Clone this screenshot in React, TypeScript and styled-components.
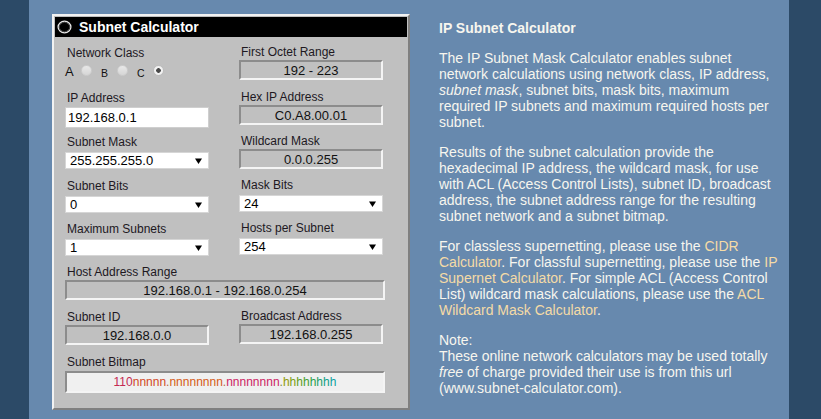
import React from "react";
import styled, { createGlobalStyle } from "styled-components";

const GlobalStyle = createGlobalStyle`
  html, body { margin: 0; padding: 0; }
  body {
    background: #2c4a67;
    font-family: "Liberation Sans", Arial, sans-serif;
  }
`;

const Page = styled.div`
  display: flex;
  padding-left: 29px;
  min-height: 100vh;
`;

const Main = styled.main`
  width: 760px;
  min-height: 100vh;
  background: #6789ae;
  display: flex;
  align-items: flex-start;
  gap: 29px;
  padding: 14px 0 0 23px;
  box-sizing: border-box;
`;

const Panel = styled.section`
  width: 358px;
  box-sizing: border-box;
  background: #c0c0c0;
  border: 2px solid;
  border-color: #f2f2f2 #808080 #808080 #f2f2f2;
  padding: 1px;
`;

const TitleBar = styled.div`
  height: 20px;
  background: #000;
  display: flex;
  align-items: center;
  padding-left: 2px;
  gap: 7px;
  color: #fff;
  font-size: 14px;
  font-weight: bold;
`;

const Body = styled.div`
  display: grid;
  grid-template-columns: 144px 144px;
  grid-template-rows: 45px 44px 44px 43px 43px 45px 45px auto;
  column-gap: 30px;
  padding: 9px 0 14px 10px;
`;

const Cell = styled.div<{ $wide?: boolean; $right?: boolean }>`
  display: flex;
  flex-direction: column;
  align-items: flex-start;
  grid-column: ${(p) => (p.$wide ? "1 / span 2" : "auto")};
  margin-top: ${(p) => (p.$right ? "-1px" : "0")};
`;

const Label = styled.div`
  font-size: 12px;
  line-height: 14px;
  color: #20181f;
  white-space: nowrap;
  padding-left: 2px;
`;

const Output = styled.div<{ $width?: number; $light?: boolean }>`
  box-sizing: border-box;
  width: ${(p) => p.$width ?? 144}px;
  height: ${(p) => (p.$light ? 22 : 20)}px;
  margin-top: ${(p) => (p.$light ? 2 : 1)}px;
  background: ${(p) => (p.$light ? "#f0f0f0" : "#c0c0c0")};
  border: 2px solid;
  border-color: #8c8c8c #f4f4f4 #f4f4f4 #8c8c8c;
  display: flex;
  align-items: center;
  justify-content: center;
  font-size: ${(p) => (p.$light ? 12 : 13)}px;
  color: #111;
  white-space: nowrap;
`;

const TextInput = styled.div`
  box-sizing: border-box;
  width: 144px;
  height: 21px;
  margin-top: 2px;
  background: #fff;
  border: 1px solid #cfcfcf;
  display: flex;
  align-items: center;
  padding-left: 2px;
  font-size: 13px;
  color: #000;
`;

const Select = styled.div`
  box-sizing: border-box;
  width: 144px;
  height: 17px;
  margin-top: 3px;
  background: #fff;
  border: 1px solid #d6d6d6;
  display: flex;
  align-items: center;
  justify-content: space-between;
  padding: 0 6px 0 4px;
  font-size: 13px;
  color: #000;
`;

const RadioRow = styled.div`
  display: flex;
  align-items: center;
  height: 20px;
`;

const RadioGroup = styled.label`
  display: flex;
  align-items: center;
  margin-right: 9px;
`;

const Letter = styled.span<{ $small?: boolean }>`
  width: 16px;
  font-size: ${(p) => (p.$small ? 10.5 : 13)}px;
  line-height: 14px;
  color: #111;
  padding-top: ${(p) => (p.$small ? 5 : 3)}px;
`;

const Radio = styled.span<{ $on?: boolean }>`
  box-sizing: border-box;
  width: 11px;
  height: 11px;
  border-radius: 50%;
  border: 1px solid ${(p) => (p.$on ? "#bdbdbd" : "#cdcdcd")};
  background: ${(p) =>
    p.$on
      ? "radial-gradient(circle, #4a4a4a 0 2px, #f2f2f2 2.6px)"
      : "linear-gradient(#e8e8e8, #d6d6d6)"};
`;

const Bits = styled.span<{ $c: string }>`
  color: ${(p) => p.$c};
`;

const Side = styled.article`
  width: 341px;
  padding-top: 6px;
  color: #f7f6ee;
  font-size: 14px;
  line-height: 16px;
`;

const Heading = styled.h2`
  font-size: 14px;
  line-height: 16px;
  font-weight: bold;
  margin: 0 0 14px;
`;

const Para = styled.p`
  margin: 0 0 14px;
`;

const Link = styled.a`
  color: #f5dba6;
  text-decoration: none;
`;

const Arrow = () => (
  <svg width="7" height="6" viewBox="0 0 7 6" aria-hidden="true">
    <polygon points="0,0.5 7,0.5 3.5,6" fill="#000" />
  </svg>
);

const TitleIcon = () => (
  <svg width="15" height="14" viewBox="0 0 15 14" aria-hidden="true">
    <ellipse cx="7.5" cy="7" rx="6.4" ry="5.8" fill="#000" stroke="#e8e8e8" strokeWidth="1.3" />
    <ellipse cx="7.5" cy="7" rx="5.2" ry="4.6" fill="none" stroke="#555" strokeWidth="0.8" />
  </svg>
);

const hColors = ["#8f9a08", "#7a9f10", "#5e9e20", "#44a030", "#2aa048", "#18a068", "#0ea088", "#0aa0a0"];

export default function App() {
  return (
    <>
      <GlobalStyle />
      <Page>
        <Main>
          <Panel>
            <TitleBar>
              <TitleIcon />
              <span>Subnet Calculator</span>
            </TitleBar>
            <Body>
              <Cell>
                <Label>Network Class</Label>
                <RadioRow>
                  <RadioGroup>
                    <Letter>A</Letter>
                    <Radio />
                  </RadioGroup>
                  <RadioGroup>
                    <Letter $small>B</Letter>
                    <Radio />
                  </RadioGroup>
                  <RadioGroup>
                    <Letter $small>C</Letter>
                    <Radio $on />
                  </RadioGroup>
                </RadioRow>
              </Cell>
              <Cell $right>
                <Label>First Octet Range</Label>
                <Output>192 - 223</Output>
              </Cell>

              <Cell>
                <Label>IP Address</Label>
                <TextInput>192.168.0.1</TextInput>
              </Cell>
              <Cell $right>
                <Label>Hex IP Address</Label>
                <Output>C0.A8.00.01</Output>
              </Cell>

              <Cell>
                <Label>Subnet Mask</Label>
                <Select>
                  <span>255.255.255.0</span>
                  <Arrow />
                </Select>
              </Cell>
              <Cell $right>
                <Label>Wildcard Mask</Label>
                <Output>0.0.0.255</Output>
              </Cell>

              <Cell>
                <Label>Subnet Bits</Label>
                <Select>
                  <span>0</span>
                  <Arrow />
                </Select>
              </Cell>
              <Cell $right>
                <Label>Mask Bits</Label>
                <Select>
                  <span>24</span>
                  <Arrow />
                </Select>
              </Cell>

              <Cell>
                <Label>Maximum Subnets</Label>
                <Select>
                  <span>1</span>
                  <Arrow />
                </Select>
              </Cell>
              <Cell $right>
                <Label>Hosts per Subnet</Label>
                <Select>
                  <span>254</span>
                  <Arrow />
                </Select>
              </Cell>

              <Cell $wide>
                <Label>Host Address Range</Label>
                <Output $width={320}>192.168.0.1 - 192.168.0.254</Output>
              </Cell>

              <Cell>
                <Label>Subnet ID</Label>
                <Output>192.168.0.0</Output>
              </Cell>
              <Cell $right>
                <Label>Broadcast Address</Label>
                <Output>192.168.0.255</Output>
              </Cell>

              <Cell $wide>
                <Label>Subnet Bitmap</Label>
                <Output $width={320} $light>
                  <Bits $c="#c42a52">110</Bits>
                  <Bits $c="#d2471f">nnnnn</Bits>
                  <Bits $c="#b86a40">.</Bits>
                  <Bits $c="#d55a16">nnnnnnnn</Bits>
                  <Bits $c="#b86a40">.</Bits>
                  <Bits $c="#cc2262">nnnnnnnn</Bits>
                  <Bits $c="#7a8a40">.</Bits>
                  {hColors.map((c, i) => (
                    <Bits key={i} $c={c}>
                      h
                    </Bits>
                  ))}
                </Output>
              </Cell>
            </Body>
          </Panel>

          <Side>
            <Heading>IP Subnet Calculator</Heading>
            <Para>
              The IP Subnet Mask Calculator enables subnet network calculations using network class, IP
              address, <em>subnet mask</em>, subnet bits, mask bits, maximum required IP subnets and
              maximum required hosts per subnet.
            </Para>
            <Para>
              Results of the subnet calculation provide the hexadecimal IP address, the wildcard mask, for
              use with ACL (Access Control Lists), subnet ID, broadcast address, the subnet address range
              for the resulting subnet network and a subnet bitmap.
            </Para>
            <Para>
              For classless supernetting, please use the <Link href="#">CIDR Calculator</Link>. For
              classful supernetting, please use the <Link href="#">IP Supernet Calculator</Link>. For
              simple ACL (Access Control List) wildcard mask calculations, please use the{" "}
              <Link href="#">ACL Wildcard Mask Calculator</Link>.
            </Para>
            <Para>
              Note:
              <br />
              These online network calculators may be used totally <em>free</em> of charge provided their
              use is from this url (www.subnet-calculator.com).
            </Para>
          </Side>
        </Main>
      </Page>
    </>
  );
}
